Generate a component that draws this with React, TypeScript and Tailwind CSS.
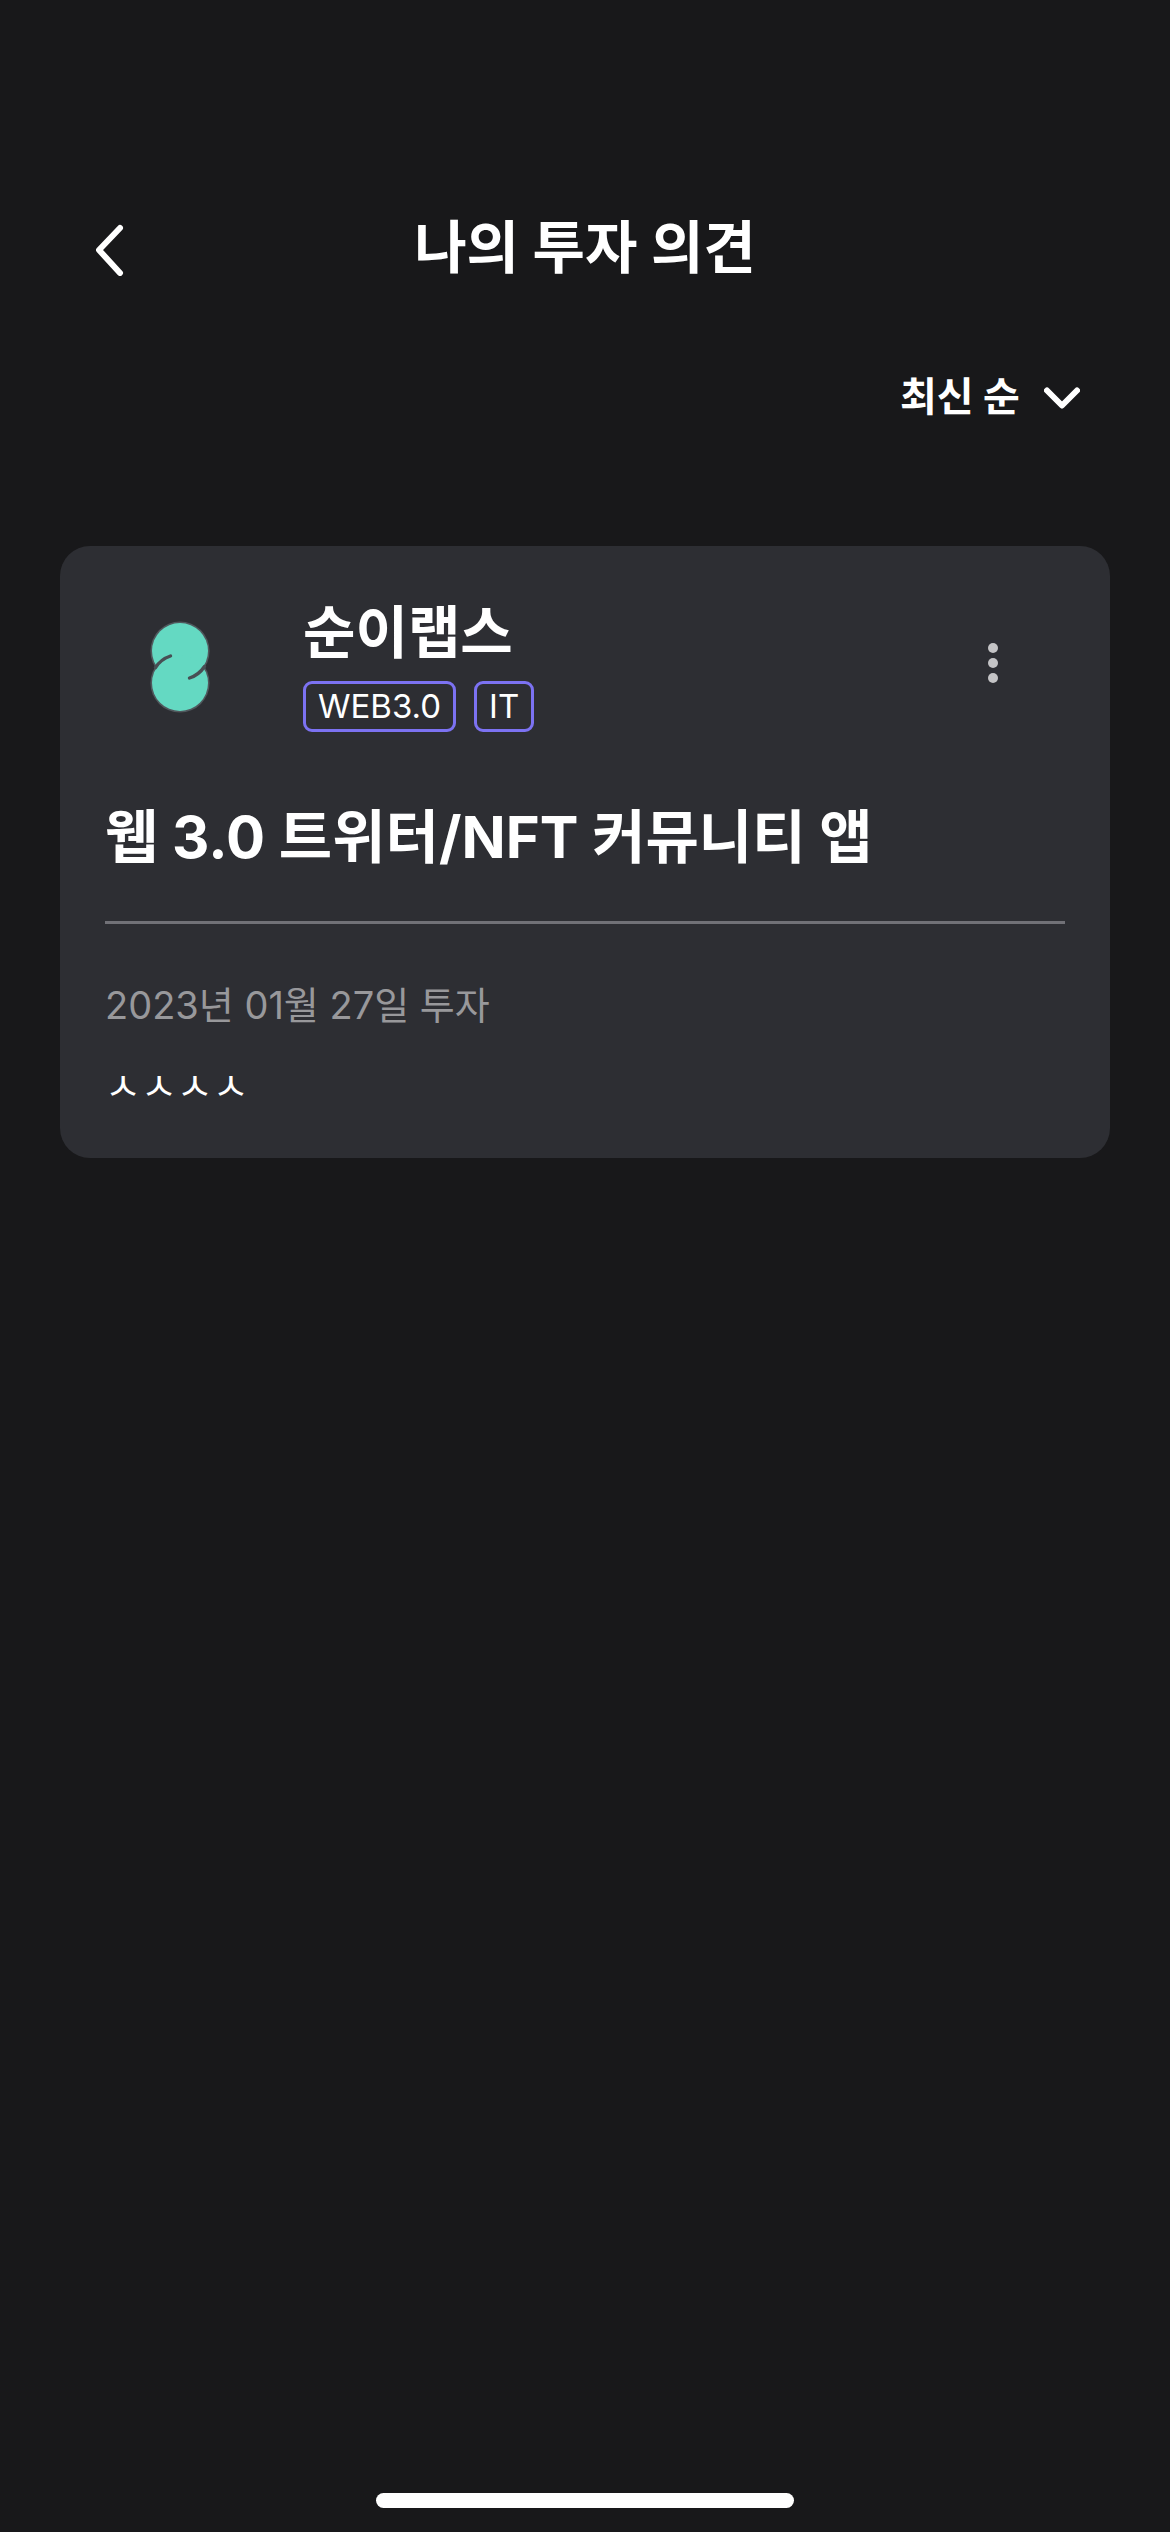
import { useState } from 'react';

const posts = [
  {
    company: '순이랩스',
    tags: ['WEB3.0', 'IT'],
    title: '웹 3.0 트위터/NFT 커뮤니티 앱',
    date: '2023년 01월 27일 투자',
    body: 'ㅅㅅㅅㅅ',
  },
];

function CompanyLogo() {
  return (
    <svg viewBox="0 0 60 94" className="w-[60px] h-[94px]" aria-hidden="true">
      <g fill="#50585d">
        <circle cx="30" cy="31" r="29.6" />
        <circle cx="30" cy="63" r="29.6" />
      </g>
      <g fill="#64d9c2">
        <circle cx="30" cy="31" r="28" />
        <circle cx="30" cy="63" r="28" />
      </g>
      <g fill="none" stroke="#484f54" strokeWidth="3.4" strokeLinecap="round">
        <path d="M5.5 47.5A28.7 28.7 0 0 1 20.5 36" />
        <path d="M54.5 46.5A28.7 28.7 0 0 1 39.5 58" />
      </g>
    </svg>
  );
}

export default function App() {
  const [sort, setSort] = useState('latest');

  return (
    <div className="min-h-screen flex flex-col bg-[#18181a] text-white font-['Inter','Noto_Sans_CJK_KR',sans-serif]">
      {/* Header */}
      <header className="grid grid-cols-[120px_1fr_120px] items-center pt-[200px] px-[60px]">
        <button type="button" aria-label="뒤로" className="h-[100px] pl-[36px]">
          <svg viewBox="0 0 28 52" className="w-[28px] h-[52px]" fill="none" stroke="currentColor" strokeWidth="6" strokeLinecap="round" strokeLinejoin="round">
            <path d="M24 4L3 26L24 49" />
          </svg>
        </button>
        <h1 className="pb-1 text-center text-[57px] leading-[96px] font-bold">나의 투자 의견</h1>
      </header>

      {/* Sort */}
      <div className="flex justify-end pt-[62px] pr-[90px]">
        <div className="relative flex items-center">
          <select
            aria-label="정렬"
            value={sort}
            onChange={(e) => setSort(e.target.value)}
            className="appearance-none bg-transparent pr-[60px] pb-[2px] h-[72px] text-[40px] leading-[70px] font-bold"
          >
            <option value="latest">최신 순</option>
          </select>
          <svg viewBox="0 0 36 22" className="absolute right-0 w-[36px] h-[22px] pointer-events-none" fill="none" stroke="currentColor" strokeWidth="6" strokeLinecap="round" strokeLinejoin="round">
            <path d="M3 3.5L18 18.5L33 3.5" />
          </svg>
        </div>
      </div>

      {/* Opinion list */}
      <main className="px-[60px] pt-[112px]">
        {posts.map((post) => (
          <article key={post.title} className="rounded-[30px] bg-[#2d2e33] px-[45px] pt-[45px] pb-[42px]">
            <div className="flex items-start">
              <div className="w-[198px] pl-[45px] pt-[29px]">
                <CompanyLogo />
              </div>
              <div className="flex-1">
                <h2 className="text-[57px] leading-[84px] font-bold">{post.company}</h2>
                <ul className="flex gap-[18px] pt-[6px]">
                  {post.tags.map((tag) => (
                    <li key={tag} className="h-[51px] px-3 rounded-[9px] border-[3px] border-[#7c72f2] text-[33px] leading-[45px]">
                      {tag}
                    </li>
                  ))}
                </ul>
              </div>
              <button type="button" aria-label="더보기" className="mt-[52px] mr-[67px]">
                <svg viewBox="0 0 10 40" className="w-[10px] h-[40px]" fill="#c4c4c6">
                  <circle cx="5" cy="5" r="5" />
                  <circle cx="5" cy="20" r="5" />
                  <circle cx="5" cy="35" r="5" />
                </svg>
              </button>
            </div>

            <h3 className="pt-[60px] text-[58px] leading-[90px] font-bold">{post.title}</h3>
            <hr className="mt-[39px] border-t-[3px] border-[#717177]" />
            <p className="pt-[51px] text-[38px] leading-[60px] text-[#98989b]">{post.date}</p>
            <p className="pt-[21px] text-[39px] leading-[60px]">{post.body}</p>
          </article>
        ))}
      </main>

      {/* Home indicator */}
      <div className="mt-auto mb-[24px] mx-auto w-[418px] h-[15px] rounded-full bg-white" />
    </div>
  );
}
